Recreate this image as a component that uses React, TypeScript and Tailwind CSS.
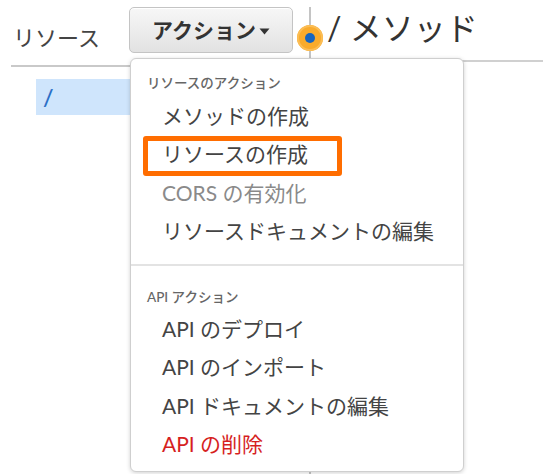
import React from "react";

type Item = { label: string; tone?: "muted" | "danger"; outlined?: boolean };

const resourceItems: Item[] = [
  { label: "メソッドの作成" },
  { label: "リソースの作成", outlined: true },
  { label: "CORS の有効化", tone: "muted" },
  { label: "リソースドキュメントの編集" },
];

const apiItems: Item[] = [
  { label: "API のデプロイ" },
  { label: "API のインポート" },
  { label: "API ドキュメントの編集" },
  { label: "API の削除", tone: "danger" },
];

const MenuItem = ({ item }: { item: Item }) => {
  const color =
    item.tone === "muted"
      ? "text-[#8a8a8a]"
      : item.tone === "danger"
        ? "text-[#d61f1f]"
        : "text-[#444]";
  return (
    <div className={`relative flex h-[38.5px] items-center pl-[31px] text-[21px] ${color}`}>
      {item.outlined && (
        <span className="absolute left-[12px] top-[1px] h-[40px] w-[199px] rounded-[3px] border-[5px] border-[#ff6d00]" />
      )}
      <span className="relative">{item.label}</span>
    </div>
  );
};

const ActionsMenu = () => (
  <div className="absolute left-[130px] top-[58px] h-[414px] w-[334px] rounded-md border border-[#cfcfcf] bg-white shadow-[0_1px_4px_rgba(0,0,0,0.18)]">
    <div className="pt-[14px]">
      <div className="pl-[16px] text-[13.5px] font-medium leading-[20px] text-[#666]">
        リソースのアクション
      </div>
      <div className="mt-[3px]">
        {resourceItems.map((item) => (
          <MenuItem key={item.label} item={item} />
        ))}
      </div>
    </div>
    <div className="mt-[14px] h-[2px] bg-[#e3e3e3]" />
    <div className="pt-[21px]">
      <div className="pl-[16px] text-[13.5px] font-medium leading-[20px] text-[#666]">
        API アクション
      </div>
      <div className="mt-[2px]">
        {apiItems.map((item) => (
          <MenuItem key={item.label} item={item} />
        ))}
      </div>
    </div>
  </div>
);

export default function App() {
  return (
    <div className="relative h-[474px] w-[543px] overflow-hidden bg-white font-['Lato','Noto_Sans_CJK_JP',sans-serif]">
      <div className="flex">
        {/* resource tree pane */}
        <div className="w-[309px] shrink-0 pl-[11px]">
          <div className="flex h-[67px] items-start border-b-2 border-[#c9c9c9]">
            <div className="w-[118px] pl-[2px] pt-[24px] text-[22px] leading-[28px] text-[#444]">
              リソース
            </div>
            <button className="mt-[7px] flex h-[46px] w-[164px] items-center justify-center gap-[3px] rounded-[5px] border border-[#c4c4c4] bg-gradient-to-b from-[#f7f7f7] to-[#e2e2e2] text-[21px] font-bold text-[#333] shadow-[inset_0_1px_0_#fff]">
              アクション
              <svg width="11" height="7" viewBox="0 0 11 7" className="mt-[2px]">
                <path d="M0.5 0.5h10L5.5 6.5z" fill="#333" />
              </svg>
            </button>
          </div>
          <div className="ml-[25px] mt-[12px] flex h-[36px] items-center bg-[#cfe5fc] pl-[7px] text-[23px] font-semibold text-[#2b6fc6]">
            /
          </div>
        </div>

        {/* method pane */}
        <div className="mt-[7px] h-[467px] flex-1 border-l-2 border-[#c4c4c4]">
          <div className="h-[55px] border-b-2 border-[#d0d0d0] pl-[16px] pt-[4px] text-[32px] leading-[34px] text-[#333]">
            / メソッド
          </div>
        </div>
      </div>

      {/* status dot on the pane divider */}
      <span className="absolute left-[297px] top-[25px] flex h-[26px] w-[26px] items-center justify-center rounded-full bg-[#f9ab2c] ring-2 ring-inset ring-[#fbbd55]">
        <span className="h-[10px] w-[10px] rounded-full bg-[#1565c0]" />
      </span>

      <ActionsMenu />
    </div>
  );
}
